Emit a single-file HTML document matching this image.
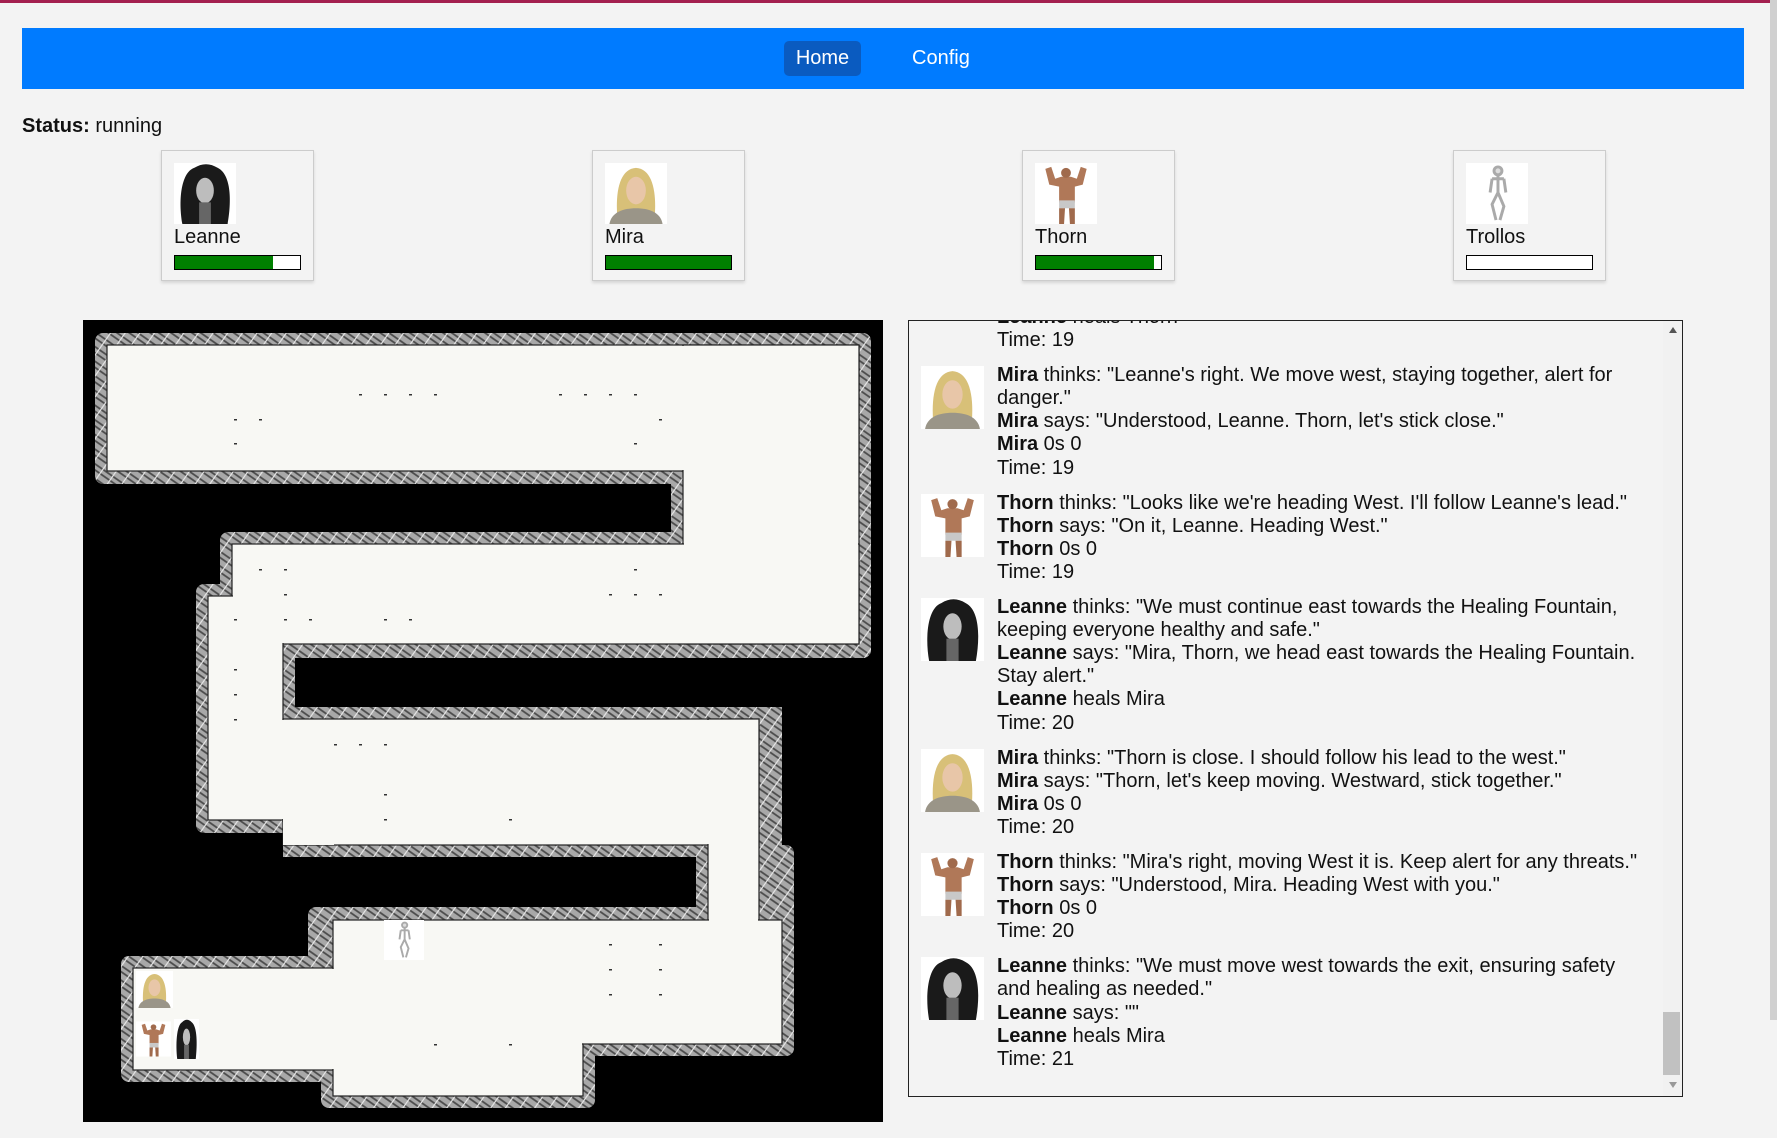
<!DOCTYPE html>
<html><head><meta charset="utf-8"><style>
*{margin:0;padding:0;box-sizing:border-box}
body{width:1777px;height:1138px;background:#f3f3f3;font-family:"Liberation Sans",Arial,sans-serif;color:#111;position:relative;overflow:hidden}
.topline{position:absolute;left:0;top:0;width:1777px;height:3px;background:#a3204f}
.nav{position:absolute;left:22px;top:28px;width:1722px;height:61px;background:#007bff}
.home{position:absolute;left:762px;top:13px;width:77px;height:35px;background:#0a5bc0;border-radius:5px;color:#fff;font-size:20px;line-height:35px;text-align:center}
.cfg{position:absolute;left:890px;top:13px;color:#fff;font-size:20px;line-height:35px}
.status{position:absolute;left:22px;top:115px;font-size:20px}
.card{position:absolute;top:150px;width:153px;height:131px;border:1px solid #ccc;background:#f3f3f3;box-shadow:0 2px 3px rgba(0,0,0,.12)}
.card .im{position:absolute;left:12px;top:12px;width:62px;height:61px;background:#fff}
.card .nm{position:absolute;left:12px;top:74px;font-size:20px;line-height:24px}
.card .bar{position:absolute;left:12px;top:104px;width:127px;height:15px;border:1.5px solid #000;background:#fff}
.card .bar i{display:block;height:100%;background:#008000}
.map{position:absolute;left:83px;top:320px;width:800px;height:802px;background:#000}
.log{position:absolute;left:908px;top:320px;width:775px;height:777px;border:1px solid #222;overflow:hidden;background:#f3f3f3}
.inner{position:absolute;left:0;top:-15px;width:760px}
.e{position:relative;padding-left:88px;font-size:20px;line-height:23.1px;margin-bottom:12px;width:736px}
.e .av{position:absolute;left:12px;top:2px;width:63px;height:63px;background:#fff}
.sb{position:absolute;right:0;top:0;width:19px;height:100%;background:#f1f1f1}
.thumb{position:absolute;left:1663px;top:1012px;width:17px;height:63px;background:#c1c1c1}
.psb{position:absolute;left:1770px;top:0;width:7px;height:1020px;background:#d0d0d0}
</style></head><body>
<div class="topline"></div>
<div class="psb"></div>
<div class="nav"><div class="home">Home</div><div class="cfg">Config</div></div>
<div class="status"><b>Status:</b> running</div>

<svg width="0" height="0" style="position:absolute">
<defs>
<symbol id="leanne" viewBox="0 0 62 62"><rect width="62" height="62" fill="#fff"/><path d="M8 62 C4 40 6 10 20 5 C28 0 36 0 44 5 C58 12 58 40 54 62Z" fill="#1a1a1a"/><ellipse cx="31" cy="28" rx="9" ry="13" fill="#bdbdbd"/><rect x="25" y="40" width="12" height="22" fill="#666"/></symbol>
<symbol id="mira" viewBox="0 0 62 62"><rect width="62" height="62" fill="#fff"/><path d="M12 55 C10 30 14 6 31 5 C48 6 52 30 50 55Z" fill="#d8c078"/><path d="M4 62 C6 50 18 46 31 46 C44 46 56 50 58 62Z" fill="#9a9588"/><ellipse cx="31" cy="28" rx="10" ry="14" fill="#e8c6a8"/></symbol>
<symbol id="thorn" viewBox="0 0 62 62"><rect width="62" height="62" fill="#fff"/><path d="M10 6 L16 4 L20 16 L26 14 L36 14 L42 16 L46 4 L52 6 L48 22 L40 24 L40 40 L24 40 L24 24 L14 22Z" fill="#b07858"/><circle cx="31" cy="10" r="5" fill="#a06a4c"/><rect x="24" y="38" width="16" height="8" fill="#c8c8c8"/><path d="M24 46 L30 46 L29 62 L24 62Z M34 46 L40 46 L40 62 L35 62Z" fill="#a06a4c"/></symbol>
<symbol id="skel" viewBox="0 0 62 62"><rect width="62" height="62" fill="#fff"/><g stroke="#aaa" stroke-width="3" fill="none"><circle cx="32" cy="8" r="4" fill="#ddd"/><path d="M32 12 L32 30 M26 16 L38 16 M26 16 L24 30 M38 16 L40 30 M32 30 L26 42 L30 58 M32 30 L38 44 L34 58"/></g></symbol>
<pattern id="hatch" width="12" height="12" patternUnits="userSpaceOnUse" patternTransform="rotate(35)"><rect width="12" height="12" fill="#a8a8a8"/><path d="M0 3 H12 M0 8 H12" stroke="#4a4a4a" stroke-width="1.8"/><path d="M6 0 V12" stroke="#e8e8e8" stroke-width="1.2"/></pattern>
</defs></svg>

<div class="card" style="left:161px"><svg class="im" viewBox="0 0 62 62"><use href="#leanne"/></svg><div class="nm">Leanne</div><div class="bar"><i style="width:78%"></i></div></div>
<div class="card" style="left:592px"><svg class="im" viewBox="0 0 62 62"><use href="#mira"/></svg><div class="nm">Mira</div><div class="bar"><i style="width:100%"></i></div></div>
<div class="card" style="left:1022px"><svg class="im" viewBox="0 0 62 62"><use href="#thorn"/></svg><div class="nm">Thorn</div><div class="bar"><i style="width:94%"></i></div></div>
<div class="card" style="left:1453px"><svg class="im" viewBox="0 0 62 62"><use href="#skel"/></svg><div class="nm">Trollos</div><div class="bar"><i style="width:0"></i></div></div>

<div class="map"><svg width="800" height="802" viewBox="0 0 800 802">
<g fill="url(#hatch)">
<rect x="12" y="13" width="776" height="151" rx="8"/>
<rect x="588" y="13" width="200" height="325" rx="8"/>
<rect x="137" y="212" width="651" height="126" rx="8"/>
<rect x="113" y="264" width="99" height="248" rx="8"/>
<rect x="113" y="387" width="575" height="126" rx="8"/>
<rect x="200" y="387" width="424" height="150"/>
<rect x="613" y="387" width="86" height="150"/>
<rect x="225" y="587" width="486" height="149" rx="8"/>
<rect x="613" y="525" width="98" height="211" rx="8"/>
<rect x="38" y="636" width="224" height="126" rx="8"/>
<rect x="238" y="700" width="274" height="88" rx="8"/>
</g>
<g fill="#f8f8f4" stroke="#222" stroke-width="1.2">
<rect x="24" y="25" width="752" height="126"/>
<rect x="600" y="25" width="176" height="299"/>
<rect x="149" y="224" width="627" height="100"/>
<rect x="125" y="276" width="75" height="224"/>
<rect x="200" y="399" width="476" height="126"/>
<rect x="625" y="399" width="51" height="325"/>
<rect x="250" y="600" width="449" height="124"/>
<rect x="50" y="648" width="200" height="102"/>
<rect x="250" y="724" width="250" height="52"/>
</g>
<g fill="#f8f8f4">
<rect x="25" y="26" width="750" height="124"/>
<rect x="601" y="26" width="174" height="297"/>
<rect x="150" y="225" width="625" height="98"/>
<rect x="126" y="277" width="73" height="222"/>
<rect x="201" y="400" width="474" height="124"/>
<rect x="626" y="400" width="49" height="323"/>
<rect x="251" y="601" width="447" height="122"/>
<rect x="51" y="649" width="200" height="100"/>
<rect x="251" y="722" width="248" height="53"/>
<rect x="126" y="400" width="75" height="99"/>
<rect x="200" y="499" width="51" height="26" />
</g>
<g fill="#333">
<rect x="276" y="74" width="3" height="1.5"/><rect x="301" y="74" width="3" height="1.5"/><rect x="326" y="74" width="3" height="1.5"/><rect x="351" y="74" width="3" height="1.5"/>
<rect x="476" y="74" width="3" height="1.5"/><rect x="501" y="74" width="3" height="1.5"/><rect x="526" y="74" width="3" height="1.5"/><rect x="551" y="74" width="3" height="1.5"/>
<rect x="151" y="99" width="3" height="1.5"/><rect x="176" y="99" width="3" height="1.5"/><rect x="576" y="99" width="3" height="1.5"/>
<rect x="151" y="123" width="3" height="1.5"/><rect x="551" y="123" width="3" height="1.5"/>
<rect x="176" y="249" width="3" height="1.5"/><rect x="201" y="249" width="3" height="1.5"/><rect x="551" y="249" width="3" height="1.5"/>
<rect x="201" y="274" width="3" height="1.5"/><rect x="526" y="274" width="3" height="1.5"/><rect x="551" y="274" width="3" height="1.5"/><rect x="576" y="274" width="3" height="1.5"/>
<rect x="151" y="299" width="3" height="1.5"/><rect x="201" y="299" width="3" height="1.5"/><rect x="226" y="299" width="3" height="1.5"/><rect x="301" y="299" width="3" height="1.5"/><rect x="326" y="299" width="3" height="1.5"/>
<rect x="151" y="349" width="3" height="1.5"/><rect x="151" y="374" width="3" height="1.5"/><rect x="151" y="399" width="3" height="1.5"/>
<rect x="251" y="424" width="3" height="1.5"/><rect x="276" y="424" width="3" height="1.5"/><rect x="301" y="424" width="3" height="1.5"/>
<rect x="301" y="474" width="3" height="1.5"/><rect x="301" y="499" width="3" height="1.5"/><rect x="426" y="499" width="3" height="1.5"/>
<rect x="526" y="624" width="3" height="1.5"/><rect x="576" y="624" width="3" height="1.5"/><rect x="526" y="649" width="3" height="1.5"/><rect x="576" y="649" width="3" height="1.5"/>
<rect x="526" y="674" width="3" height="1.5"/><rect x="576" y="674" width="3" height="1.5"/><rect x="351" y="724" width="3" height="1.5"/><rect x="426" y="724" width="3" height="1.5"/>
</g>
<svg x="301" y="600" width="40" height="40" viewBox="0 0 62 62"><use href="#skel"/></svg>
<svg x="53" y="650" width="37" height="39" viewBox="0 0 62 62"><use href="#mira"/></svg>
<svg x="53" y="699" width="35" height="40" viewBox="0 0 62 62"><use href="#thorn"/></svg>
<svg x="91" y="699" width="25" height="40" viewBox="0 0 62 62" preserveAspectRatio="none"><use href="#leanne"/></svg>
</svg></div>

<div class="log">
<div class="inner">
<div class="e"><b>Leanne</b> heals Thorn<br>Time: 19</div>
<div class="e"><svg class="av" viewBox="0 0 62 62"><use href="#mira"/></svg><b>Mira</b> thinks: "Leanne's right. We move west, staying together, alert for danger."<br><b>Mira</b> says: "Understood, Leanne. Thorn, let's stick close."<br><b>Mira</b> 0s 0<br>Time: 19</div>
<div class="e"><svg class="av" viewBox="0 0 62 62"><use href="#thorn"/></svg><b>Thorn</b> thinks: "Looks like we're heading West. I'll follow Leanne's lead."<br><b>Thorn</b> says: "On it, Leanne. Heading West."<br><b>Thorn</b> 0s 0<br>Time: 19</div>
<div class="e"><svg class="av" viewBox="0 0 62 62"><use href="#leanne"/></svg><b>Leanne</b> thinks: "We must continue east towards the Healing Fountain, keeping everyone healthy and safe."<br><b>Leanne</b> says: "Mira, Thorn, we head east towards the Healing Fountain. Stay alert."<br><b>Leanne</b> heals Mira<br>Time: 20</div>
<div class="e"><svg class="av" viewBox="0 0 62 62"><use href="#mira"/></svg><b>Mira</b> thinks: "Thorn is close. I should follow his lead to the west."<br><b>Mira</b> says: "Thorn, let's keep moving. Westward, stick together."<br><b>Mira</b> 0s 0<br>Time: 20</div>
<div class="e"><svg class="av" viewBox="0 0 62 62"><use href="#thorn"/></svg><b>Thorn</b> thinks: "Mira's right, moving West it is. Keep alert for any threats."<br><b>Thorn</b> says: "Understood, Mira. Heading West with you."<br><b>Thorn</b> 0s 0<br>Time: 20</div>
<div class="e"><svg class="av" viewBox="0 0 62 62"><use href="#leanne"/></svg><b>Leanne</b> thinks: "We must move west towards the exit, ensuring safety and healing as needed."<br><b>Leanne</b> says: ""<br><b>Leanne</b> heals Mira<br>Time: 21</div>
</div>
<div class="sb"></div>
<div style="position:absolute;right:5px;top:6px;width:0;height:0;border-left:4px solid transparent;border-right:4px solid transparent;border-bottom:6px solid #555"></div>
<div style="position:absolute;right:5px;bottom:8px;width:0;height:0;border-left:4px solid transparent;border-right:4px solid transparent;border-top:6px solid #999"></div>
</div>
<div class="thumb"></div>
</body></html>
